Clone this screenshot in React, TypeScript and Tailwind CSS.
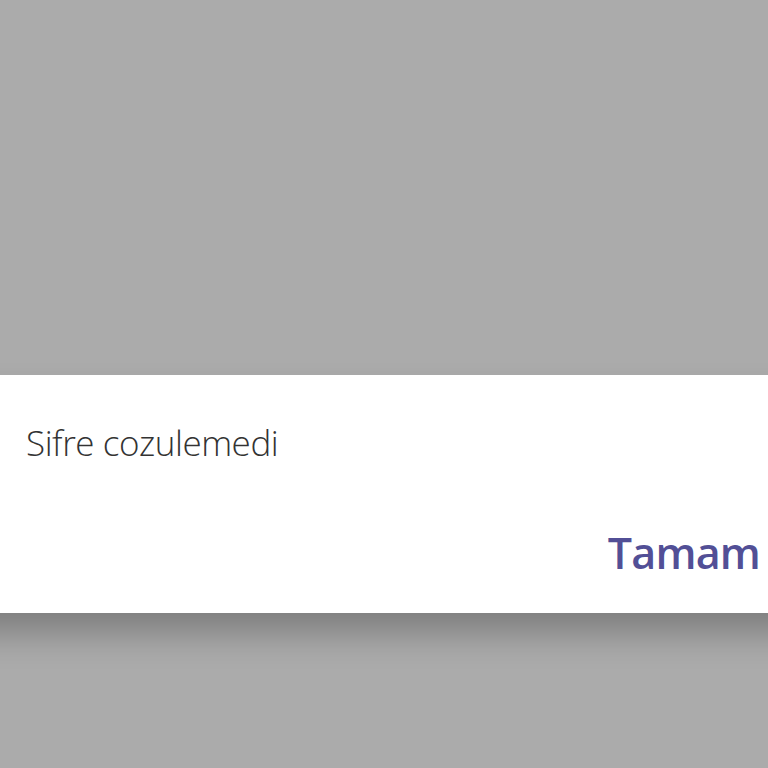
export default function App() {
  return (
    <div className="flex h-[768px] w-[768px] flex-col overflow-hidden bg-[#ababab] font-['Open_Sans',sans-serif]">
      <div className="h-[375px] shrink-0" />
      <div className="relative mx-[-60px] flex h-[238px] shrink-0 flex-col bg-white px-[60px] shadow-[0_22px_32px_-2px_rgba(0,0,0,0.26)]">
        <p className="mt-[44px] pl-[26px] text-[35px] font-light leading-[48px] tracking-[-0.45px] text-[#333333]">
          Sifre cozulemedi
        </p>
        <div className="mt-auto mb-[30px] flex justify-end pr-[8px]">
          <button type="button" className="text-[43px] font-semibold leading-[60px] tracking-[-0.8px] text-[#524f96]">
            Tamam
          </button>
        </div>
      </div>
    </div>
  );
}
